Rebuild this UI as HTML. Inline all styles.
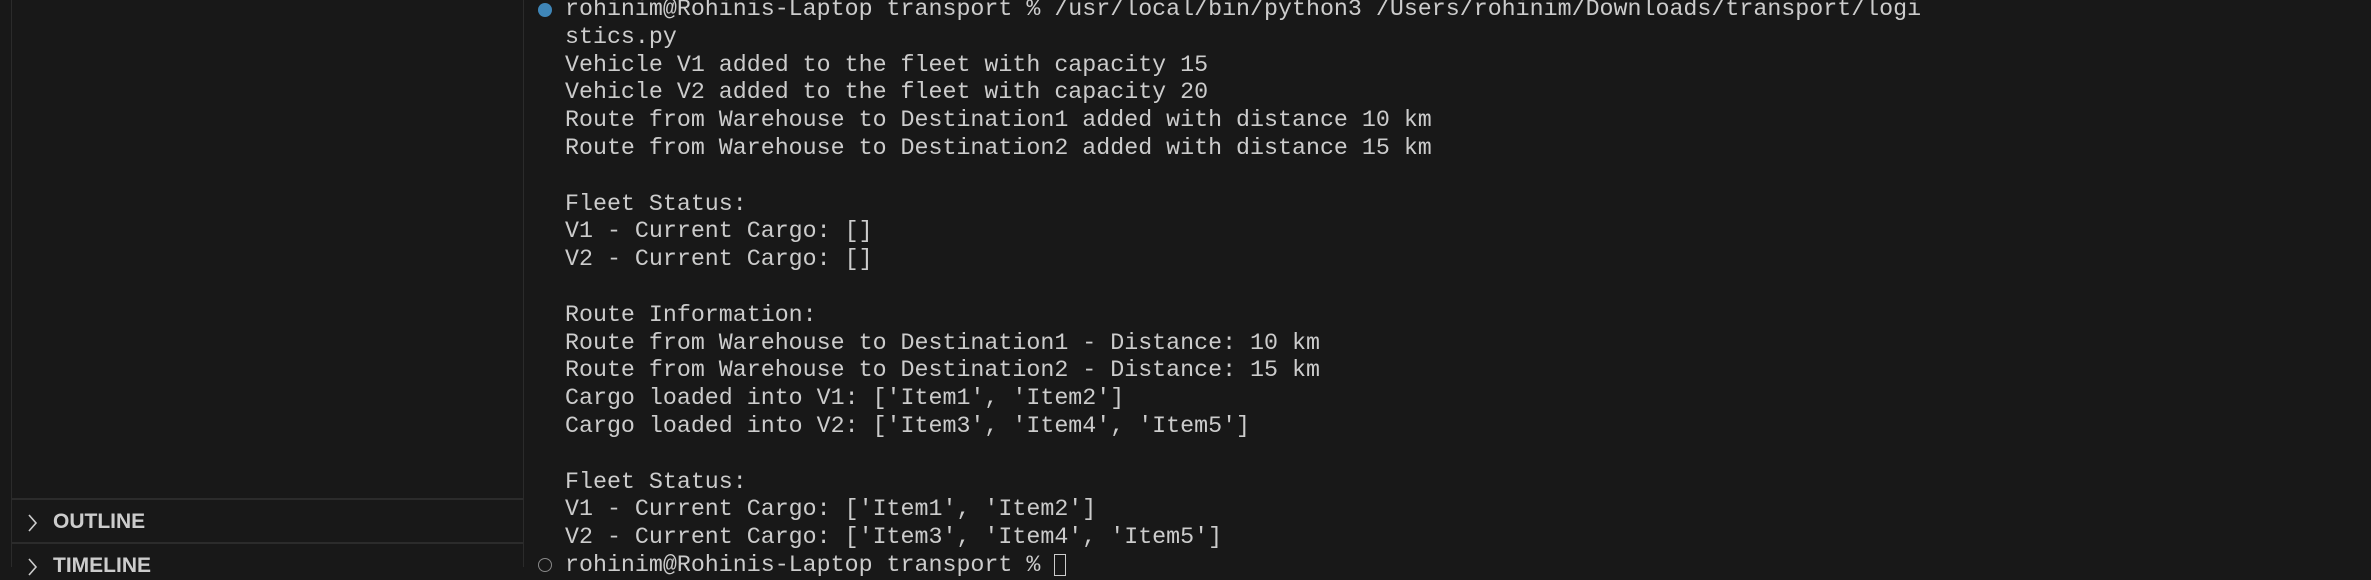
<!DOCTYPE html>
<html><head><style>
body{margin:0;width:2371px;height:567px;background:#181818;overflow:hidden;position:relative;font-family:"Liberation Mono",monospace;}
.sb{position:absolute;left:11px;top:0;width:511px;height:567px;border-left:1px solid #2b2b2b;border-right:1px solid #2b2b2b;}
.div{position:absolute;left:0;width:511px;height:2px;background:#2b2b2b;}
.hd{position:absolute;left:14px;color:#cccccc;font:bold 21px "Liberation Sans",sans-serif;}
.hd svg{position:absolute;left:0;top:2px}
.hd span{position:absolute;left:27px;top:0;white-space:nowrap}
.term{position:absolute;left:565px;top:-4px;color:#cccccc;font-size:23.3px;line-height:27.8px;white-space:pre;}
.dot{position:absolute;left:538px;width:14px;height:14px;border-radius:50%;}
</style></head><body>
<div class="sb">
 <div class="div" style="top:498px"></div>
 <div class="hd" style="top:510px"><svg width="14" height="22" viewBox="0 0 14 22"><path d="M3 3l7 8-7 8" stroke="#cccccc" stroke-width="1.6" fill="none"/></svg><span>OUTLINE</span></div>
 <div class="div" style="top:542px"></div>
 <div class="hd" style="top:554px"><svg width="14" height="22" viewBox="0 0 14 22"><path d="M3 3l7 8-7 8" stroke="#cccccc" stroke-width="1.6" fill="none"/></svg><span>TIMELINE</span></div>
</div>
<div class="dot" style="top:3px;background:#3f86b8"></div>
<div class="dot" style="top:558px;border:1.5px solid #888;box-sizing:border-box"></div>
<div class="term">rohinim@Rohinis-Laptop transport % /usr/local/bin/python3 /Users/rohinim/Downloads/transport/logi
stics.py
Vehicle V1 added to the fleet with capacity 15
Vehicle V2 added to the fleet with capacity 20
Route from Warehouse to Destination1 added with distance 10 km
Route from Warehouse to Destination2 added with distance 15 km

Fleet Status:
V1 - Current Cargo: []
V2 - Current Cargo: []

Route Information:
Route from Warehouse to Destination1 - Distance: 10 km
Route from Warehouse to Destination2 - Distance: 15 km
Cargo loaded into V1: ['Item1', 'Item2']
Cargo loaded into V2: ['Item3', 'Item4', 'Item5']

Fleet Status:
V1 - Current Cargo: ['Item1', 'Item2']
V2 - Current Cargo: ['Item3', 'Item4', 'Item5']
rohinim@Rohinis-Laptop transport % <span style="display:inline-block;width:12px;height:22px;border:1.5px solid #cccccc;box-sizing:border-box;vertical-align:middle"></span></div>
</body></html>
